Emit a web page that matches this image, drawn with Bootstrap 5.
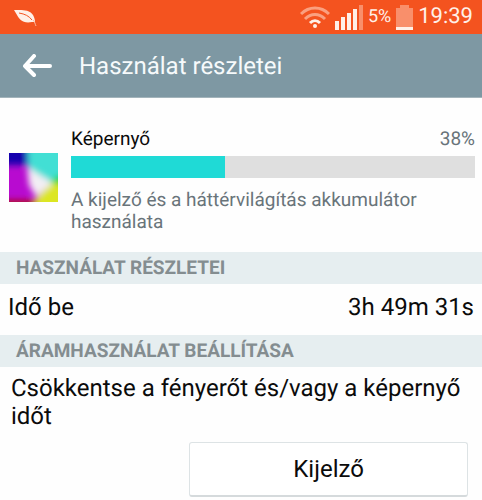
<!DOCTYPE html>
<html lang="hu">
<head>
<meta charset="utf-8">
<meta name="viewport" content="width=device-width, initial-scale=1">
<title>Használat részletei</title>
<link rel="stylesheet" href="https://cdn.jsdelivr.net/npm/bootstrap@5.3.0/dist/css/bootstrap.min.css">
<style>
  body { font-family: Roboto, sans-serif; font-size: 24px; line-height: 28px; color: #0b0b0b; background: #fefefe; text-rendering: geometricPrecision; }
  .status-bar { background: #f4531f; height: 34px; padding: 0 9px 0 13px; color: #fff0e8; }
  .status-icons { gap: 5px; }
  .battery-level { font-size: 18px; }
  .clock { font-size: 22px; line-height: 32px; }
  .app-bar { background: #7e98a3; height: 64px; padding: 0 22px; gap: 27px; border-bottom: 1px solid #a3b4bb; }
  .app-title { font-size: 24px; line-height: 28px; color: #f6fafb; }
  .usage { padding: 30px 7px 19px 9px; gap: 13px; font-size: 19px; line-height: 22px; }
  .usage-icon { margin-top: 25px; }
  .muted { color: #69747a; }
  .usage .progress { height: 22px; margin: 6px 0 11px; background: #dfdfdf; }
  .usage .progress-bar { background: #1fdad6; }
  .section-title { background: #e6eef0; color: #848d90; font-size: 19px; line-height: 32px; padding: 0 16px; }
  .time-row { padding: 9px 8px 14px; }
  .advice { padding: 7px 14px 5px 11px; }
  .advice-text { margin-bottom: 12px; }
  .btn-display { width: 61%; padding: 12px; font-size: 24px; line-height: 28px; background: #fff; color: #0b0b0b; border: 1px solid #dde3e5; border-bottom: 2px solid #d5dadc; border-radius: 3px; }
</style>
<script src="https://cdn.jsdelivr.net/npm/bootstrap@5.3.0/dist/js/bootstrap.bundle.min.js"></script>
</head>
<body>
<div class="status-bar d-flex align-items-center justify-content-between">
  <svg width="24" height="20" viewBox="0 0 24 20" aria-hidden="true">
    <path d="M1 3C8 3 16 2 20 8c1 2 2 4 2 7-1 0-2 0-3 0C10 17 6 12 4 8Z" fill="#fff0e8"/>
    <path d="M6 6c6 1 10 3 13 7" fill="none" stroke="#f4531f" stroke-width="1"/>
    <path d="M20 13c2 2 2 4 3 6" fill="none" stroke="#fbb9a0" stroke-width="1"/>
  </svg>
  <div class="status-icons d-flex align-items-center">
    <svg width="30" height="24" viewBox="0 0 30 24" fill="none" stroke-width="3" aria-hidden="true">
      <path d="M1 9C9 1 21 1 29 9" stroke="#faa080"/>
      <path d="M5 14C11 8 19 8 25 14" stroke="#faa080"/>
      <path d="M10 18C13 15 17 15 20 18" stroke="#fff0e8"/>
      <circle cx="15" cy="21" r="2" fill="#fff0e8"/>
    </svg>
    <svg width="28" height="26" viewBox="0 0 28 26" fill="#fff0e8" aria-hidden="true">
      <path d="M0 17h4v9H0zM6 13h4v13H6zM12 9h4v17h-4zM18 5h4v21h-4z"/>
      <path d="M24 1h4v25h-4z" fill="#f98f6b"/>
    </svg>
    <span class="battery-level">5%</span>
    <svg width="17" height="26" viewBox="0 0 17 26" aria-hidden="true">
      <path d="M4 1h9v3h4v19H0V4h4z" fill="#f98f6b"/>
      <path d="M0 23h17v3H0z" fill="#fff0e8"/>
    </svg>
    <span class="clock">19:39</span>
  </div>
</div>
<header class="app-bar d-flex align-items-center">
  <button type="button" class="btn p-0 border-0 d-flex" aria-label="Vissza">
    <svg width="30" height="24" viewBox="0 0 30 24" fill="none" stroke="#fff" stroke-width="4" stroke-linecap="round" stroke-linejoin="round" aria-hidden="true">
      <path d="M12 2L3 12l9 9M3 12h25"/>
    </svg>
  </button>
  <h1 class="app-title fw-normal m-0">Használat részletei</h1>
</header>
<main>
  <section class="usage d-flex align-items-start">
    <svg class="usage-icon flex-shrink-0" width="49" height="49" viewBox="0 0 49 49" aria-hidden="true">
      <defs>
        <filter id="soft" x="-20%" y="-20%" width="140%" height="140%"><feGaussianBlur stdDeviation="3"/></filter>
        <clipPath id="tile"><path d="M0 0h49v49H0z"/></clipPath>
      </defs>
      <g clip-path="url(#tile)">
        <path d="M0 0h49v49H0z" fill="#b80bd0"/>
        <g filter="url(#soft)">
          <path d="M-15-15h34v27h-34z" fill="#1800ae"/>
          <path d="M-15 47h45v20h-45z" fill="#b00820"/>
          <path d="M18-15h50v45H42L19 15z" fill="#42dfd4"/>
          <path d="M44 26l20-10v30L38 32z" fill="#22d52b"/>
          <path d="M43 30l22 4v33H22l5-22z" fill="#dce622"/>
          <path d="M18 14L44 30 27 44 20 32z" fill="#f3eef4"/>
        </g>
      </g>
    </svg>
    <div class="flex-grow-1">
      <div class="d-flex justify-content-between"><span id="usage-name">Képernyő</span><span class="muted">38%</span></div>
      <div class="progress rounded-0" role="progressbar" aria-labelledby="usage-name" aria-valuenow="38" aria-valuemin="0" aria-valuemax="100">
        <div class="progress-bar" style="width: 38%"></div>
      </div>
      <p class="muted m-0">A kijelző és a háttérvilágítás akkumulátor használata</p>
    </div>
  </section>
  <h2 class="section-title fw-bold m-0">HASZNÁLAT RÉSZLETEI</h2>
  <div class="time-row d-flex justify-content-between"><span>Idő be</span><span>3h 49m 31s</span></div>
  <h2 class="section-title fw-bold m-0">ÁRAMHASZNÁLAT BEÁLLÍTÁSA</h2>
  <section class="advice">
    <p class="advice-text">Csökkentse a fényerőt és/vagy a képernyő időt</p>
    <div class="d-flex justify-content-end"><button type="button" class="btn btn-display">Kijelző</button></div>
  </section>
</main>
</body>
</html>
